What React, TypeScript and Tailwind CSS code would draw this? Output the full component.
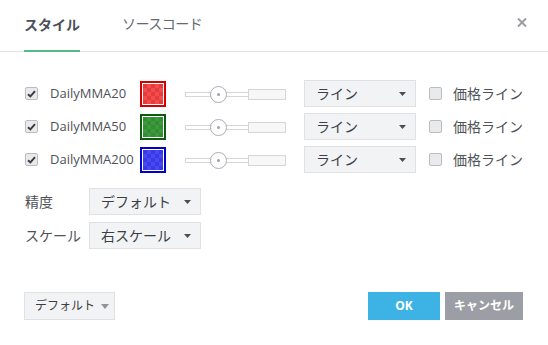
import React from 'react';

const FONT = { fontFamily: '"Open Sans", "Noto Sans CJK JP", sans-serif' };

function Check({ checked }: { checked: boolean }) {
  return (
    <span className="flex h-[13px] w-[13px] items-center justify-center rounded-[2px] border border-[#b9bcc2] bg-[#e9eaec]">
      {checked && (
        <svg width="9" height="8" viewBox="0 0 9 8">
          <path d="M1 4.2 L3.4 6.4 L8 1.2" fill="none" stroke="#3a3d42" strokeWidth="2" />
        </svg>
      )}
    </span>
  );
}

function Swatch({ id, border, a, b }: { id: string; border: string; a: string; b: string }) {
  return (
    <span className="flex h-[26px] w-[26px] p-px" style={{ border: `2px solid ${border}` }}>
      <svg width="20" height="20" viewBox="0 0 20 20">
        <defs>
          <pattern id={id} width="8" height="8" patternUnits="userSpaceOnUse">
            <rect width="8" height="8" fill={a} />
            <rect width="4" height="4" fill={b} />
            <rect x="4" y="4" width="4" height="4" fill={b} />
          </pattern>
        </defs>
        <rect width="20" height="20" fill={`url(#${id})`} />
      </svg>
    </span>
  );
}

function Slider() {
  return (
    <div className="relative h-[20px] w-[101px]">
      <div className="absolute left-0 top-[8px] h-[5px] w-[66px] border border-[#d4d6da] bg-white" />
      <div className="absolute left-[63px] top-[5px] h-[11px] w-[38px] border border-[#d4d6da] bg-[#f7f7f8]" />
      <div className="absolute left-[25px] top-[2px] flex h-[17px] w-[17px] items-center justify-center rounded-full border border-[#a9adb5] bg-white">
        <span className="h-[3px] w-[3px] rounded-full bg-[#9ea2a9]" />
      </div>
    </div>
  );
}

function Select({ label, w }: { label: string; w: string }) {
  return (
    <div className={`flex h-[27px] ${w} items-center justify-between border border-[#dfe1e5] bg-[#f2f3f5] pl-[11px] pr-[9px] text-[14px] text-[#3b3f45]`}>
      <span>{label}</span>
      <svg width="7" height="4" viewBox="0 0 7 4">
        <path d="M0 0 H7 L3.5 4 Z" fill="#4a4d52" />
      </svg>
    </div>
  );
}

const rows = [
  { name: 'DailyMMA20', id: 'p1', border: '#d40000', a: '#f24c4c', b: '#e53d3d' },
  { name: 'DailyMMA50', id: 'p2', border: '#0d5c0d', a: '#3d993d', b: '#328d32' },
  { name: 'DailyMMA200', id: 'p3', border: '#0000cc', a: '#4848f0', b: '#3a3ae4' },
];

export default function App() {
  return (
    <div className="h-[345px] w-[548px] bg-white text-[#4a4d52]" style={FONT}>
      {/* Tabs */}
      <div className="relative flex h-[52px] items-end border-b border-[#e1e3e7] pl-6">
        <div className="-mb-px border-b-2 border-[#53b987] pb-[15px] text-[14px] font-bold text-[#4a4f59]">スタイル</div>
        <div className="ml-[42px] pb-[17px] text-[14px] tracking-[-0.5px] text-[#636871]">ソースコード</div>
        <svg className="absolute right-[21px] top-[18px]" width="10" height="9" viewBox="0 0 10 9">
          <path d="M1 0.5 L9 8.5 M9 0.5 L1 8.5" stroke="#9a9ca2" strokeWidth="2" />
        </svg>
      </div>

      {/* Plots */}
      <div className="pl-[25px] pt-[25px]">
        {rows.map((r) => (
          <div key={r.id} className="flex h-[33px] items-center">
            <Check checked />
            <span className="ml-[12px] w-[90px] text-[13px] text-[#4f5257]">{r.name}</span>
            <Swatch id={r.id} border={r.border} a={r.a} b={r.b} />
            <div className="ml-[19px]">
              <Slider />
            </div>
            <div className="ml-[18px]">
              <Select label="ライン" w="w-[112px]" />
            </div>
            <div className="ml-[13px]">
              <Check checked={false} />
            </div>
            <span className="ml-[11px] text-[14px] text-[#4f5257]">価格ライン</span>
          </div>
        ))}

        <div className="mt-[12px] flex flex-col gap-[7px]">
          <div className="flex items-center">
            <span className="w-[64px] text-[14px] text-[#4f5257]">精度</span>
            <Select label="デフォルト" w="w-[112px]" />
          </div>
          <div className="flex items-center">
            <span className="w-[64px] text-[14px] text-[#4f5257]">スケール</span>
            <Select label="右スケール" w="w-[112px]" />
          </div>
        </div>
      </div>

      {/* Footer */}
      <div className="mt-[43px] flex items-center justify-between pl-6 pr-[25px]">
        <div className="flex h-[28px] w-[91px] items-center gap-[6px] border border-[#dfe1e5] bg-[#f2f3f5] pl-[10px] text-[12px] text-[#3b3f45]">
          <span>デフォルト</span>
          <svg width="8" height="5" viewBox="0 0 8 5">
            <path d="M0 0 H8 L4 5 Z" fill="#909398" />
          </svg>
        </div>
        <div className="flex gap-[5px]">
          <button className="flex h-[28px] w-[72px] items-center justify-center bg-[#3cb3e4] text-[12px] font-bold text-white">OK</button>
          <button className="flex h-[28px] w-[78px] items-center justify-center bg-[#9b9ea4] text-[12px] font-bold text-white">キャンセル</button>
        </div>
      </div>
    </div>
  );
}
